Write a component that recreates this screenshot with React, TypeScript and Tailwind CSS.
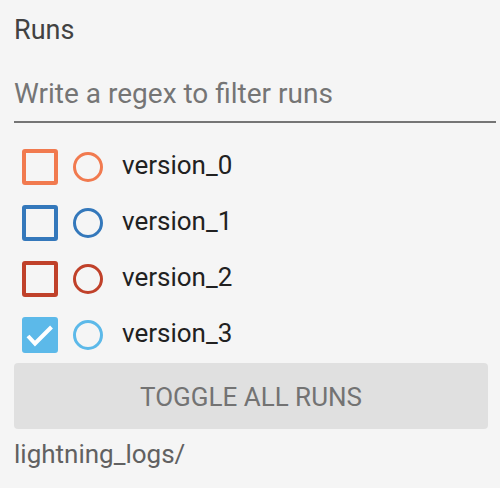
import React from "react";

type Run = { name: string; color: string; checked: boolean };

const runs: Run[] = [
  { name: "version_0", color: "#f17a4f", checked: false },
  { name: "version_1", color: "#3478bb", checked: false },
  { name: "version_2", color: "#c0412a", checked: false },
  { name: "version_3", color: "#5cb9e9", checked: true },
];

const RunRow: React.FC<{ run: Run }> = ({ run }) => {
  return (
    <div className="flex items-center h-[56px]">
      <div
        className="ml-[8px] w-[36px] h-[36px] rounded-[3px] border-[4px] flex items-center justify-center"
        style={{
          borderColor: run.color,
          backgroundColor: run.checked ? run.color : "transparent",
        }}
      >
        {run.checked && (
          <svg width="36" height="36" viewBox="0 0 36 36" className="shrink-0">
            <polyline
              points="6,19 13,26.5 29.5,10"
              fill="none"
              stroke="#ffffff"
              strokeWidth="4"
            />
          </svg>
        )}
      </div>
      <div
        className="ml-[15px] w-[30px] h-[30px] rounded-full border-[3px]"
        style={{ borderColor: run.color }}
      />
      <span className="ml-[19px] mb-[5px] text-[26px] leading-[30px] text-[#212121]">
        {run.name}
      </span>
    </div>
  );
};

const App: React.FC = () => {
  return (
    <div
      className="w-[500px] h-[488px] bg-[#f5f5f5] pl-[14px] pr-[4px] flex flex-col"
      style={{ fontFamily: "Roboto, 'Noto Sans', sans-serif" }}
    >
      <div className="pt-[1px] h-[58px] text-[27px] leading-[58px] text-[#424242]">
        Runs
      </div>
      <input
        className="mt-[8px] h-[57px] w-full bg-transparent border-b-2 border-[#757575] text-[28px] outline-none placeholder-[#757575] text-[#212121] p-0"
        placeholder="Write a regex to filter runs"
      />
      <div className="mt-[16px] flex flex-col">
        {runs.map((run) => (
          <RunRow key={run.name} run={run} />
        ))}
      </div>
      <button
        type="button"
        className="mr-[8px] h-[66px] rounded-[4px] bg-[#e0e0e0] pt-[2px] text-[26px] leading-[30px] text-[#737373]"
      >
        TOGGLE ALL RUNS
      </button>
      <div className="mt-[10px] text-[26px] leading-[30px] text-[#616161]">
        lightning_logs/
      </div>
    </div>
  );
};

export default App;
